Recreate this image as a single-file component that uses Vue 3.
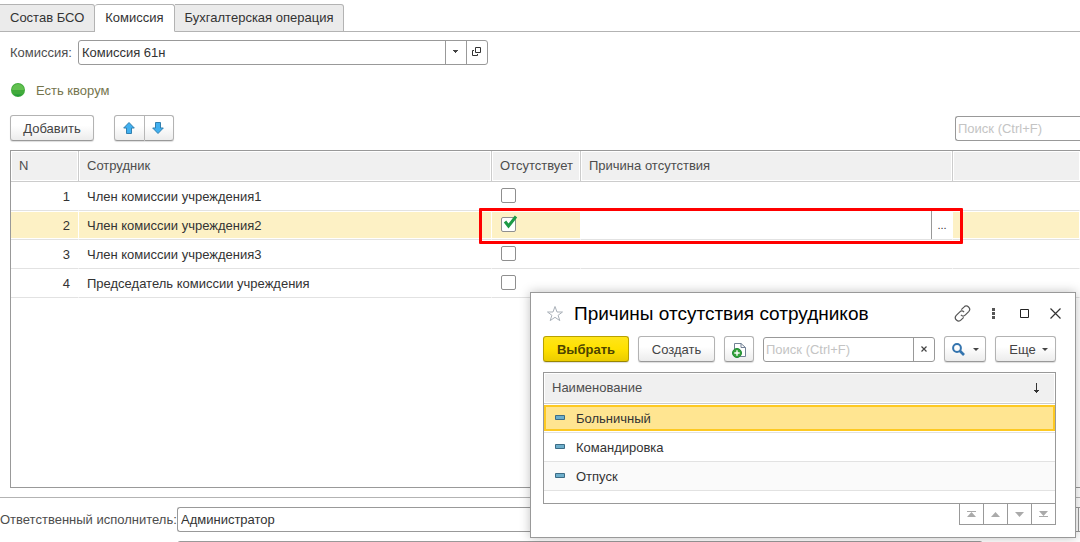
<script setup>
import { ref } from 'vue'

const tabs = ['Состав БСО', 'Комиссия', 'Бухгалтерская операция']
const activeTab = ref(1)
const commission = ref('Комиссия 61н')
const responsible = ref('Администратор')
const reason = ref('')
const extra = ref('')

const members = ref([
  { name: 'Член комиссии учреждения1', absent: false },
  { name: 'Член комиссии учреждения2', absent: true },
  { name: 'Член комиссии учреждения3', absent: false },
  { name: 'Председатель комиссии учреждения', absent: false },
])
const currentMember = ref(1)

const reasons = ['Больничный', 'Командировка', 'Отпуск']
const currentReason = ref(0)
</script>

<template>
  <div class="page">
    <nav class="tabs">
      <button
        v-for="(tab, i) in tabs"
        :key="tab"
        type="button"
        class="tab"
        :class="{ active: i === activeTab }"
        @click="activeTab = i"
      >{{ tab }}</button>
    </nav>

    <main class="content">
      <div class="field-row">
        <label for="commission">Комиссия:</label>
        <div class="field commission">
          <input id="commission" v-model="commission" type="text">
          <button type="button" class="field-btn" aria-label="Выбрать из списка">
            <svg width="5" height="3" viewBox="0 0 5 3"><path d="M0 0h5v1H4v1H3v1H2V2H1V1H0z" fill="#444" /></svg>
          </button>
          <button type="button" class="field-btn" aria-label="Открыть">
            <svg width="9" height="9" viewBox="0 0 9 9" fill="none" stroke="#333"><path d="M3.500.5h5v5h-5zM2 3.500H.5v5h5V7" /></svg>
          </button>
        </div>
      </div>

      <div class="quorum">
        <svg width="14" height="14" viewBox="0 0 14 14">
          <circle cx="7" cy="7" r="7" fill="#41ab3b" />
          <path d="M1 7a6 6 0 0 1 12 0z" fill="#62c050" />
          <path d="M2.500 11.500a6.500 6.500 0 0 0 9 0z" fill="#239a3e" />
        </svg>
        <span>Есть кворум</span>
      </div>

      <div class="toolbar">
        <button type="button" class="btn add">Добавить</button>
        <div class="btn-group">
          <button type="button" class="btn" aria-label="Переместить вверх">
            <svg width="12" height="12" viewBox="0 0 12 12"><path d="M6 .5 11.300 6H8.500v5.500h-5V6H.7z" fill="#41b0f0" stroke="#3180b0" /></svg>
          </button>
          <button type="button" class="btn" aria-label="Переместить вниз">
            <svg width="12" height="12" viewBox="0 0 12 12"><path d="M6 11.500.7 6h2.800V.5h5V6h2.800z" fill="#41b0f0" stroke="#3180b0" /></svg>
          </button>
        </div>
        <div class="field main-search">
          <input type="text" placeholder="Поиск (Ctrl+F)" aria-label="Поиск по таблице">
        </div>
      </div>

      <section class="members">
        <table>
          <colgroup><col class="c-n"><col class="c-name"><col class="c-abs"><col class="c-reason"><col></colgroup>
          <thead>
            <tr><th>N</th><th>Сотрудник</th><th>Отсутствует</th><th>Причина отсутствия</th><th></th></tr>
          </thead>
          <tbody>
            <tr
              v-for="(m, i) in members"
              :key="m.name"
              :class="{ current: i === currentMember }"
              @click="currentMember = i"
            >
              <td class="num">{{ i + 1 }}</td>
              <td>{{ m.name }}</td>
              <td class="flag"><input v-model="m.absent" type="checkbox" class="check" :aria-label="'Отсутствует: ' + m.name"><svg v-if="m.absent" class="tick" width="15" height="14" viewBox="0 0 15 14"><path d="M2 6.500 5.500 11 13 1.500" fill="none" stroke="#1d9a45" stroke-width="3" /></svg></td>
              <td :class="{ editing: i === currentMember }">
                <div v-if="i === currentMember" class="editor">
                  <input v-model="reason" type="text" aria-label="Причина отсутствия">
                  <button type="button" aria-label="Выбрать причину">...</button>
                </div>
              </td>
              <td></td>
            </tr>
          </tbody>
        </table>
        <div class="highlight"></div>
      </section>
    </main>

    <footer class="footer">
      <div class="footer-row">
        <label for="responsible">Ответственный исполнитель:</label>
        <div class="field responsible">
          <input id="responsible" v-model="responsible" type="text">
          <button type="button" class="field-btn" aria-label="Выбрать исполнителя"></button>
        </div>
      </div>
      <div class="footer-row">
        <span></span>
        <div class="field extra"><input v-model="extra" type="text" aria-label="Комментарий"></div>
      </div>
    </footer>

    <div class="dialog" role="dialog" aria-labelledby="dialog-title">
      <header class="dialog-head">
        <button type="button" class="icon" aria-label="В избранное">
          <svg width="18" height="17" viewBox="0 0 18 17"><path d="M9 1.500 11 7h5.500l-4.400 3.300 1.700 5.300L9 12.300l-4.800 3.300 1.700-5.300L1.500 7H7z" fill="none" stroke="#a9b0b8" /></svg>
        </button>
        <h1 id="dialog-title">Причины отсутствия сотрудников</h1>
        <div class="window-tools">
          <button type="button" class="icon" aria-label="Ссылка">
            <svg width="17" height="17" viewBox="0 0 17 17" fill="none" stroke="#555" stroke-width="1.200"><path d="M7.300 4.700 9.900 2.100a3.200 3.200 0 0 1 4.800 4.500l-3.300 3.300a3.200 3.200 0 0 1-4.500 0M9.700 12.300l-2.600 2.600a3.200 3.200 0 0 1-4.800-4.500l3.300-3.300a3.200 3.200 0 0 1 4.500 0" /></svg>
          </button>
          <button type="button" class="icon" aria-label="Меню">
            <svg width="3" height="11" viewBox="0 0 3 11" fill="#555"><path d="M0 0h3v3H0zM0 4h3v3H0zM0 8h3v3H0z" /></svg>
          </button>
          <button type="button" class="icon" aria-label="Развернуть">
            <svg width="9" height="9" viewBox="0 0 9 9"><path d="M.5.5h8v8h-8z" fill="none" stroke="#222" /></svg>
          </button>
          <button type="button" class="icon" aria-label="Закрыть">
            <svg width="11" height="11" viewBox="0 0 11 11"><path d="m.5.5 10 10M10.500.5l-10 10" stroke="#333" stroke-width="1.200" /></svg>
          </button>
        </div>
      </header>

      <div class="dialog-tools">
        <button type="button" class="btn primary">Выбрать</button>
        <button type="button" class="btn create">Создать</button>
        <button type="button" class="btn group" aria-label="Создать группу">
          <svg width="14" height="16" viewBox="0 0 14 16">
            <path d="M2.500 7V1.500H9L13.500 5.500v9H8" fill="#fff" stroke="#728195" />
            <path d="M9 1.500v4h4.500" fill="none" stroke="#728195" />
            <circle cx="5" cy="11" r="4.500" fill="#35a23a" stroke="#1e8a35" />
            <path d="M5 8.300v5.400M2.300 11h5.400" stroke="#fff" stroke-width="1.400" />
          </svg>
        </button>
        <div class="field dialog-search">
          <input type="text" placeholder="Поиск (Ctrl+F)" aria-label="Поиск причины">
          <button type="button" class="field-btn" aria-label="Очистить">
            <svg width="6" height="6" viewBox="0 0 6 6"><path d="m.5.5 5 5M5.500.5l-5 5" stroke="#444" stroke-width="1.200" /></svg>
          </button>
        </div>
        <button type="button" class="btn find" aria-label="Найти">
          <svg width="13" height="13" viewBox="0 0 13 13" fill="none" stroke="#3474ae"><circle cx="5" cy="5" r="3.900" stroke-width="2" /><path d="m8 8 4 4" stroke-width="2.600" /></svg>
          <svg width="6" height="3" viewBox="0 0 6 3"><path d="M0 0h6L3 3z" fill="#444" /></svg>
        </button>
        <button type="button" class="btn more">
          Еще
          <svg width="6" height="3" viewBox="0 0 6 3"><path d="M0 0h6L3 3z" fill="#444" /></svg>
        </button>
      </div>

      <div class="reasons">
        <table>
          <thead>
            <tr>
              <th>
                <div class="sort-head">
                  <span>Наименование</span>
                  <svg width="7" height="11" viewBox="0 0 7 11"><path d="M3 0h1v7h2v1H5v1H4v1H3V9H2V8H1V7h2z" fill="#333" /></svg>
                </div>
              </th>
            </tr>
          </thead>
          <tbody>
            <tr v-for="(r, i) in reasons" :key="r" @click="currentReason = i">
              <td>
                <div class="reason" :class="{ selected: i === currentReason }">
                  <svg width="10" height="5" viewBox="0 0 10 5"><path d="M.5.5h9v4h-9z" fill="#6daecb" stroke="#3d6c85" /></svg>
                  <span>{{ r }}</span>
                </div>
              </td>
            </tr>
          </tbody>
        </table>
      </div>
      <div class="pager">
        <button type="button" aria-label="В начало"><svg width="9" height="6" viewBox="0 0 9 6"><path d="M0 0h9v1H0zM4.500 1 9 6H0z" fill="#aaa" /></svg></button>
        <button type="button" aria-label="Вверх"><svg width="9" height="5" viewBox="0 0 9 5"><path d="M4.500 0 9 5H0z" fill="#aaa" /></svg></button>
        <button type="button" aria-label="Вниз"><svg width="9" height="5" viewBox="0 0 9 5"><path d="M0 0h9L4.500 5z" fill="#aaa" /></svg></button>
        <button type="button" aria-label="В конец"><svg width="9" height="6" viewBox="0 0 9 6"><path d="M0 0h9L4.500 5zM0 5h9v1H0z" fill="#aaa" /></svg></button>
      </div>
    </div>
  </div>
</template>

<style>
body { background: #fff; }
</style>

<style scoped>
.page, .page * { box-sizing: border-box; }
.page {
  position: relative;
  display: flex;
  flex-direction: column;
  height: 100vh;
  overflow: hidden;
  background: #fff;
  color: #333;
  font: 13px/16px "Liberation Sans", Arial, sans-serif;
}
button, input { font: inherit; color: inherit; margin: 0; padding: 0; }
button { display: flex; align-items: center; justify-content: center; background: none; border: 0; white-space: nowrap; }
svg { display: block; flex: none; }
label { color: #4d4d4d; white-space: nowrap; }

.tabs { display: flex; flex: none; height: 32px; padding-top: 4px; border-bottom: 1px solid #b3b3b3; }
.tab {
  height: 28px;
  padding: 0 10px;
  background: #ebebeb;
  border: 1px solid #b3b3b3;
  border-left-width: 0;
  border-radius: 0 3px 0 0;
}
.tab.active { background: #fff; border-bottom-color: #fff; border-radius: 3px 3px 0 0; }

.content { display: flex; flex: 1; flex-direction: column; min-height: 0; padding: 8px 0 9px 10px; }
.field-row { display: flex; align-items: center; gap: 6px; }
.field { display: flex; height: 25px; background: #fff; border: 1px solid #999; border-radius: 3px; overflow: hidden; }
.field input { flex: 1; min-width: 0; padding: 0 3px; background: none; border: 0; outline: 0; }
.field input::placeholder { color: #c4c4c4; opacity: 1; }
.field-btn { flex: none; width: 21px; padding-bottom: 2px; border-left: 1px solid #999; }
.commission { width: 410px; }
.quorum { display: flex; align-items: flex-start; gap: 11px; height: 16px; margin: 18px 0 16px 1px; color: #75754d; }

.toolbar { display: flex; align-items: center; height: 27px; }
.btn {
  height: 26px;
  margin-bottom: 1px;
  color: #444;
  background: linear-gradient(#fff 40%, #ececec);
  border: 1px solid #b3b3b3;
  border-bottom-color: #999;
  border-radius: 3px;
  box-shadow: 0 1px 1px #ddd;
}
.add { width: 84px; margin-right: 20px; padding-top: 1px; }
.btn-group { display: flex; }
.btn-group .btn { width: 31px; padding-right: 2px; border-radius: 3px 0 0 3px; }
.btn-group .btn + .btn { width: 29px; border-left: 0; border-radius: 0 3px 3px 0; }
.main-search { width: 125px; margin-left: auto; border-right: 0; border-radius: 3px 0 0 3px; }
.main-search input { padding: 0 2px; }

.members { position: relative; flex: 1; min-height: 0; margin-top: 8px; border: 1px solid #999; border-right: 0; }
table { width: 100%; border-collapse: separate; border-spacing: 0; table-layout: fixed; }
th { height: 31px; padding: 0 8px; font-weight: 400; text-align: left; color: #4d4d4d; background: #f0f0f0; border-right: 1px solid #ccc; border-bottom: 1px solid #ccc; box-shadow: inset 0 0 0 1px #fff; }
th:last-child { border-right: 0; }
td { height: 29px; padding: 2px 8px 0; border-bottom: 1px solid #e2e2e2; }
.members td { border-right: 1px solid #fff; }
.c-n { width: 68px; }
.c-name { width: 413px; }
.c-abs { width: 89px; }
.c-reason { width: 372px; }
.num { text-align: right; }
.members .current td { background: #fdf1c5; box-shadow: inset 0 1px #fff, inset 0 -1px #fff; }
.members .current td.editing { padding: 0; background: #fff; }
.members .flag { position: relative; padding: 0 8px 1px; }
.check { display: block; appearance: none; width: 15px; height: 15px; margin-left: 1px; background: #fff; border: 1px solid #8f8f8f; border-radius: 2px; }
.tick { position: absolute; left: 11px; top: 4px; pointer-events: none; }
.editor { display: flex; height: 28px; }
.editor input { flex: 1; min-width: 0; padding: 0 8px; background: none; border: 0; outline: 0; }
.editor button { width: 21px; font-size: 11px; border-left: 1px solid #999; }
.highlight { position: absolute; left: 468px; top: 57px; width: 484px; height: 36px; border: 3px solid #f00; border-radius: 1px; pointer-events: none; }

.footer { display: flex; flex: 0 0 45px; flex-direction: column; gap: 9px; padding-top: 9px; border-top: 1px solid #b3b3b3; overflow: hidden; }
.footer-row { display: grid; flex: none; grid-template-columns: 177px 1fr; align-items: center; }
.responsible { border-right: 0; border-radius: 3px 0 0 3px; }
.responsible .field-btn { width: 2px; }
.extra { margin-right: 97px; }

.dialog {
  position: absolute;
  right: 4px;
  top: 292px;
  width: 546px;
  padding: 8px 19px 12px 12px;
  background: #fff;
  border: 1px solid #999;
  box-shadow: 0 0 10px rgba(0, 0, 0, 0.25);
}
.dialog-head { display: flex; align-items: center; height: 24px; padding-left: 3px; }
.dialog-head h1 { flex: 1; margin: 0 0 0 10px; padding-top: 2px; font-size: 19px; line-height: 24px; font-weight: 400; color: #000; white-space: nowrap; }
.window-tools { display: flex; margin-right: -15px; }
.window-tools .icon { width: 31px; height: 24px; }
.dialog-tools { display: flex; align-items: center; gap: 9px; margin-top: 11px; }
.dialog-tools .btn { padding-top: 1px; }
.primary { width: 86px; font-weight: 700; color: #4d4400; background: linear-gradient(#ffe51a, #ffe100 50%, #ebcc00); border-color: #b8a100; border-bottom-color: #998600; }
.create { width: 77px; }
.group { width: 30px; }
.dialog-search { flex: 1; }
.dialog-search input { padding: 0 2px; }
.find { width: 42px; gap: 8px; }
.more { width: 61px; gap: 6px; padding-left: 6px; }
.reasons { height: 132px; margin-top: 9px; border: 1px solid #999; }
.reasons td { height: 29px; padding: 1px 0; }
.reasons tr:nth-child(3) td { background: #fafafa; }
.sort-head { display: flex; align-items: center; justify-content: space-between; padding-right: 7px; }
.reason { display: flex; align-items: center; gap: 11px; height: 26px; padding-left: 9px; border: 2px solid transparent; }
.reason svg { margin-bottom: 2px; }
.reason span { padding-top: 2px; }
.reason.selected { background: #ffe591; border-color: #fdc922; }
.pager { display: flex; justify-content: flex-end; margin-top: -1px; }
.pager button { width: 25px; height: 22px; border: 1px solid #999; }
.pager button + button { width: 24px; border-left: 0; }
</style>
